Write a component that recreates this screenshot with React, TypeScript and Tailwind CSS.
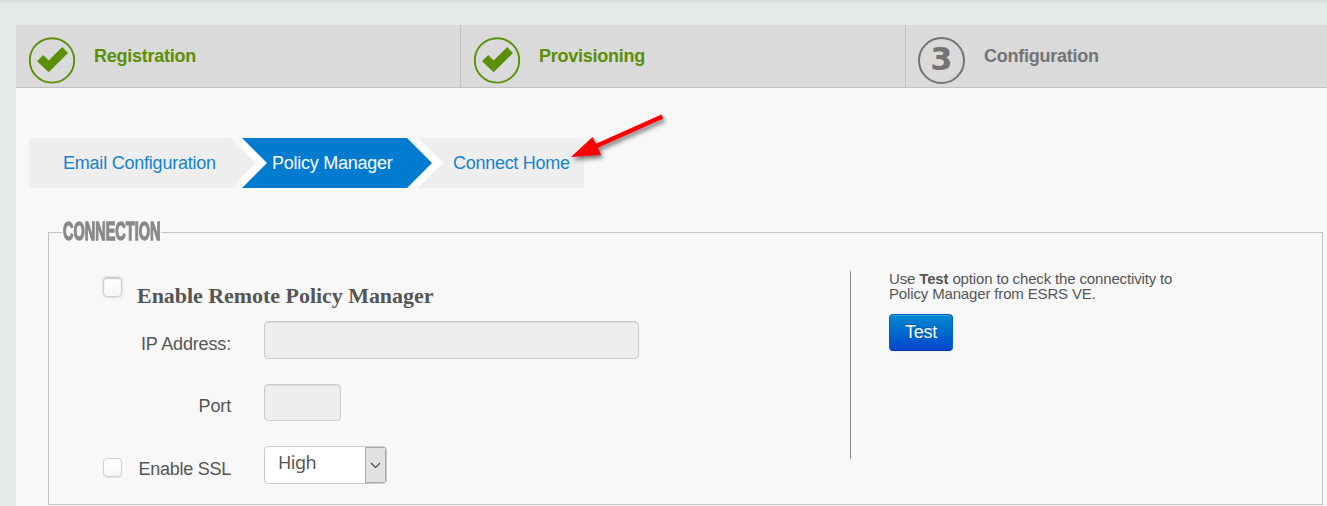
import type { ReactNode } from "react";

function CheckMark() {
  return (
    <svg width="46" height="47" viewBox="0 0 46 47" className="block">
      <circle cx="23" cy="23.4" r="22.2" fill="none" stroke="#5a8f06" strokeWidth="1.9" />
      <path d="M8 24.2 L14.2 18.1 L19.7 23.6 L33.2 10.1 L39 16.1 L19.7 35.2 Z" fill="#5a8f06" />
    </svg>
  );
}

function Step({ icon, label, tone, border }: { icon: ReactNode; label: string; tone: string; border: string }) {
  return (
    <div className={`flex h-[62px] items-start pl-[13px] pt-3 ${border}`}>
      {icon}
      <span className={`ml-[19px] mt-[6px] text-[18px] font-bold leading-[26px] tracking-[-0.25px] ${tone}`}>{label}</span>
    </div>
  );
}

function Tip({ color }: { color: string }) {
  return <span className={`absolute left-full top-0 z-10 h-[50px] w-[25px] [clip-path:polygon(0_0,100%_50%,0_100%)] ${color}`} />;
}

function Notch() {
  return <span className="absolute left-0 top-0 h-[50px] w-[25px] bg-white [clip-path:polygon(0_0,100%_50%,0_100%)]" />;
}

function CheckBox({ raised }: { raised?: boolean }) {
  return (
    <button
      role="checkbox"
      aria-checked="false"
      className={`block w-[19px] rounded-[4px] border bg-linear-to-b from-white to-[#f6f6f6] ${
        raised ? "h-[20px] border-[#cfcfcf] shadow-[0_0_2px_1px_#e2e2e2,inset_0_1px_1px_#c8c8c8]" : "h-[19px] border-[#d0d0d0] shadow-[0_1px_1px_#e8e8e8]"
      }`}
    />
  );
}

const field = "rounded-[4px] border border-[#ccc] bg-[#eee] shadow-[inset_0_1px_1px_rgba(0,0,0,0.075)]";

export default function App() {
  return (
    <div className="relative h-[506px] w-[1327px] overflow-hidden bg-[#e5eaea] pl-4 pt-[25px] font-['Liberation_Sans',sans-serif] text-[#555]">
      <div className="absolute left-0 top-0 h-[5px] w-full bg-linear-to-b from-[#d8dddd] to-[#e5eaea]" />
      <main className="h-[481px] bg-[#f8f8f8]">
        <header className="grid grid-cols-[445px_445px_1fr] border-b border-[#c1c1c1] bg-[#dadada]">
          <Step icon={<CheckMark />} label="Registration" tone="text-[#5a8f06]" border="border-r border-[#c1c1c1]" />
          <Step icon={<CheckMark />} label="Provisioning" tone="text-[#5a8f06]" border="border-r border-[#c1c1c1]" />
          <Step
            icon={
              <span className="-ml-px flex h-[47px] w-[47px] items-center justify-center rounded-full border-2 border-[#737373] pb-[3px] font-['DejaVu_Sans',sans-serif] text-[32px] font-bold leading-none text-[#737373]">
                3
              </span>
            }
            label="Configuration"
            tone="text-[#737373]"
            border=""
          />
        </header>

        <nav className="ml-[13px] mt-[50px] flex h-[50px] text-[18px] leading-[50px] tracking-[-0.22px] text-[#1583cc]">
          <div className="relative mr-[11px] w-[202px] rounded-l-[4px] bg-[#eee] pl-[34px]">
            <span className="whitespace-nowrap">Email Configuration</span>
            <Tip color="bg-[#eee]" />
          </div>
          <div className="relative mr-[11px] w-[165px] bg-[#007bd0] pl-[30px] text-white">
            <Notch />
            <span className="whitespace-nowrap tracking-[-0.26px]">Policy Manager</span>
            <Tip color="bg-[#007bd0]" />
          </div>
          <div className="relative w-[166px] rounded-r-[4px] bg-[#eee] pl-[35px]">
            <Notch />
            <span className="whitespace-nowrap tracking-[-0.28px]">Connect Home</span>
          </div>
        </nav>

        <fieldset className="ml-8 mt-[31px] flex h-[286px] w-[1275px] border border-[#c6c1c4]">
          <legend className="ml-[13px] h-[27px] w-[99px] whitespace-nowrap">
            <span className="relative -top-px left-px inline-block origin-left scale-x-[0.58] text-[25px] font-bold leading-[27px] text-[#888] [-webkit-text-stroke:1.3px_#888]">
              CONNECTION
            </span>
          </legend>
          <div className="flex h-full">
            <div className="w-[801px] pt-[31px]">
              <div className="flex pl-[54px]">
                <CheckBox raised />
                <h2 className="ml-[15px] mt-[6px] font-['Liberation_Serif',serif] text-[22px] font-bold leading-[26px] tracking-[-0.04px]">Enable Remote Policy Manager</h2>
              </div>
              <div className="mt-[12px] flex h-[38px] text-[18px] tracking-[-0.15px]">
                <label className="w-[182px] pt-[10px] text-right leading-[27px]">IP Address:</label>
                <input readOnly className={`ml-[33px] h-[38px] w-[375px] ${field}`} />
              </div>
              <div className="mt-[25px] flex h-[37px] text-[18px] tracking-[-0.15px]">
                <label className="w-[182px] pt-[9px] text-right leading-[27px]">Port</label>
                <input readOnly className={`ml-[33px] h-[37px] w-[77px] ${field}`} />
              </div>
              <div className="mt-[25px] flex h-[38px] text-[18px]">
                <div className="flex w-[182px] pl-[54px] pt-[12px]">
                  <CheckBox />
                  <label className="-mt-[2px] ml-auto leading-[27px] tracking-[-0.25px]">Enable SSL</label>
                </div>
                <div className="ml-[33px] flex h-[38px] w-[123px] overflow-hidden rounded-[4px] border border-[#ccc] bg-white">
                  <span className="flex-1 pl-[13px] pt-[2px] font-['Noto_Sans','Open_Sans',sans-serif] text-[18px] leading-[27px] tracking-[-0.5px]">High</span>
                  <span className="flex w-[21px] items-center justify-center border border-[#a9a9a9] bg-[#e1e1e1]">
                    <svg width="11" height="7" viewBox="0 0 11 7" fill="none" stroke="#444" strokeWidth="1.1">
                      <path d="M1 1 L5.5 5.5 L10 1" />
                    </svg>
                  </span>
                </div>
              </div>
            </div>
            <aside className="mt-[25px] h-[188px] border-l border-[#8c8c8c] pl-[38px]">
              <p className="w-[300px] text-[15px] leading-[15px] tracking-[-0.15px]">
                Use <b>Test</b> option to check the connectivity to
                <br />
                Policy Manager from ESRS VE.
              </p>
              <button className="mt-[13px] h-[37px] w-[64px] rounded-[4px] border border-[#0062c5] border-b-[#003ab5] bg-linear-to-b from-[#0088cc] to-[#0044cc] text-[18px] tracking-[-0.2px] text-white shadow-[inset_0_1px_0_rgba(255,255,255,0.2),0_1px_2px_rgba(0,0,0,0.05)] [text-shadow:0_-1px_0_rgba(0,0,0,0.25)]">
                Test
              </button>
            </aside>
          </div>
        </fieldset>
      </main>

      <svg className="absolute left-[566px] top-[108px] drop-shadow-[2px_3px_2px_rgba(0,0,0,0.5)]" width="104" height="58" viewBox="566 108 104 58">
        <path d="M571 157 L592.5 137 L596 143.7 L661.5 114.5 L663.3 118.6 L598 147.7 L601 155 Z" fill="#ff0000" />
      </svg>
    </div>
  );
}
